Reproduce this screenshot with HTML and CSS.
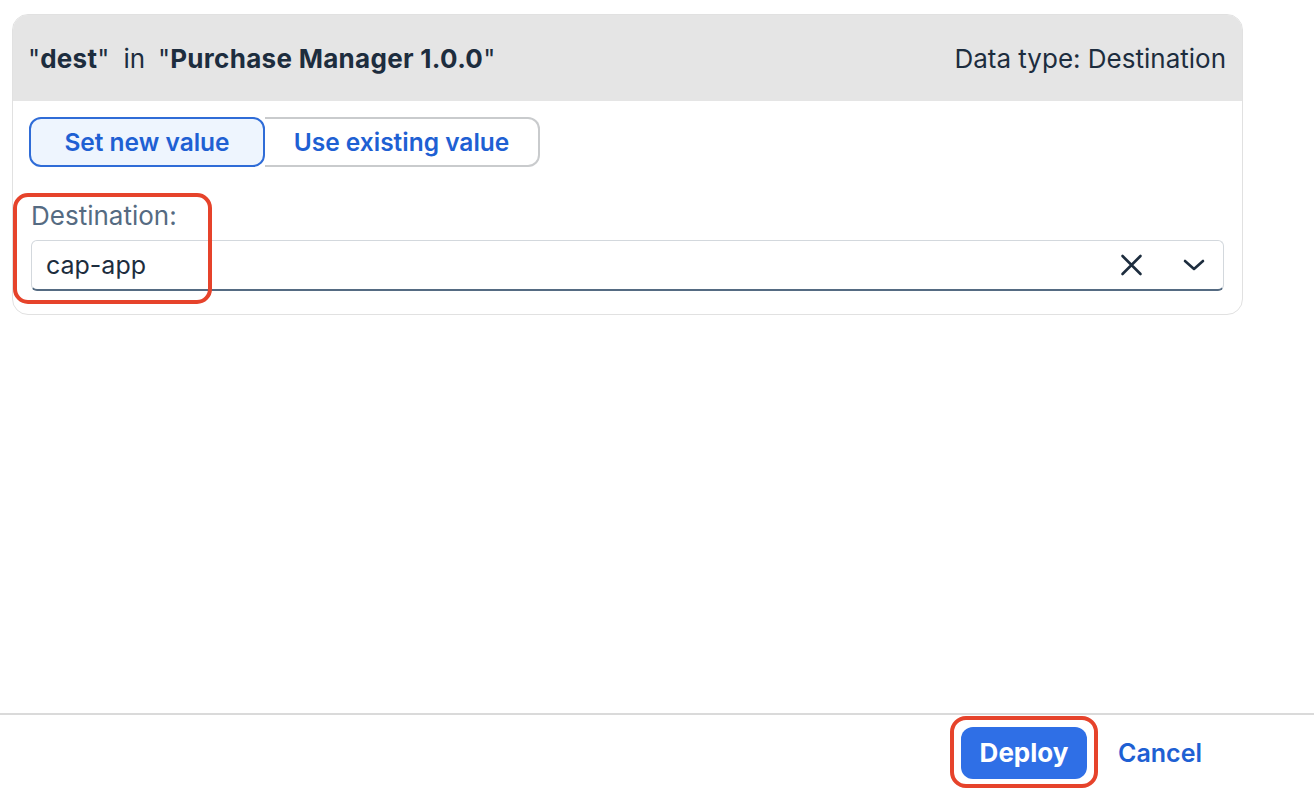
FILE: index.html
```html
<!DOCTYPE html>
<html lang="en">
<head>
<meta charset="utf-8">
<title>Destination</title>
<link rel="stylesheet" href="styles.css">
</head>
<body>
<div class="page">
  <main class="main">
    <section class="card">
      <header class="card-header">
        <div class="title"><span class="q">"</span><b>dest</b><span class="q">"</span><span class="in">in</span><span class="q">"</span><b>Purchase Manager 1.0.0</b><span class="q">"</span></div>
        <div class="type">Data type: Destination</div>
      </header>
      <div class="card-body">
        <div class="segmented">
          <button class="seg seg-active">Set new value</button>
          <button class="seg">Use existing value</button>
        </div>
        <div class="field">
          <label class="label">Destination:</label>
          <div class="input">
            <span class="value">cap-app</span>
            <span class="icons">
              <svg class="ico-x" width="22" height="22" viewBox="0 0 22 22"><path d="M2 2 L20 20 M20 2 L2 20" stroke="#1d2d3e" stroke-width="2.6" stroke-linecap="round" fill="none"/></svg>
              <svg class="ico-chev" width="22" height="12" viewBox="0 0 22 12"><path d="M2 2 L11 10 L20 2" stroke="#1d2d3e" stroke-width="2.6" stroke-linecap="round" stroke-linejoin="round" fill="none"/></svg>
            </span>
          </div>
          <div class="highlight hl-field"></div>
        </div>
      </div>
    </section>
  </main>
  <footer class="footer">
    <div class="deploy-wrap">
      <button class="btn-primary">Deploy</button>
      <div class="highlight hl-deploy"></div>
    </div>
    <button class="btn-link">Cancel</button>
  </footer>
</div>
</body>
</html>
```
FILE: styles.css
```css
* { box-sizing: border-box; }
html, body { margin: 0; padding: 0; background: #fff; }
body {
  font-family: "Inter", "Noto Sans", "Liberation Sans", sans-serif;
  color: #1d2d3e;
}
.page {
  width: 1314px;
  height: 790px;
  display: flex;
  flex-direction: column;
}
.main {
  flex: 1;
  padding: 14px 71px 0 12px;
}
.card {
  border: 1px solid #e1e1e1;
  border-radius: 16px;
}
.card-header {
  height: 86px;
  background: #e5e5e5;
  border-radius: 15px 15px 0 0;
  display: flex;
  align-items: center;
  justify-content: space-between;
  padding: 0 16px 0 15px;
  font-size: 26px;
  color: #1d2d3e;
}
.title b { font-weight: 700; letter-spacing: 0.3px; }
.title .q { font-weight: 400; }
.title .in { margin: 0 13px 0 14px; }
.type { font-weight: 400; }
.card-body {
  padding: 16px 18px 23px 16px;
}
.segmented {
  display: flex;
  width: 511px;
  height: 50px;
}
.seg {
  font-family: inherit;
  font-size: 24.5px;
  font-weight: 600;
  color: #1e60d3;
  background: #fff;
  border: 2px solid #c9cbcd;
  border-left: none;
  border-radius: 0 12px 12px 0;
  padding: 0 12px;
  flex: 1;
}
.seg-active {
  flex: 0 0 236px;
  background: #eef5fe;
  border: 2px solid #2f6cd7;
  border-radius: 12px;
}
.field {
  position: relative;
  padding: 34px 0 0 2px;
}
.label {
  display: block;
  font-size: 26px;
  color: #556b82;
  line-height: 30px;
  margin-bottom: 9px;
}
.input {
  height: 51px;
  border: 1px solid #d3d8dd;
  border-bottom: 2px solid #556b82;
  border-radius: 6px;
  display: flex;
  align-items: center;
  justify-content: space-between;
  padding: 0 18px 0 14px;
}
.value {
  font-size: 25px;
  color: #1d2d3e;
}
.icons {
  display: flex;
  align-items: center;
  gap: 40px;
}
.ico-x { width: 23px; height: 22px; }
.highlight {
  position: absolute;
  border: 4px solid #e6432b;
  border-radius: 15px;
  pointer-events: none;
}
.hl-field {
  left: -16px;
  top: 26px;
  width: 199px;
  height: 111px;
}
.footer {
  height: 77px;
  border-top: 2px solid #dadada;
  display: flex;
  align-items: center;
  justify-content: flex-end;
  padding: 0 96px 0 0;
  gap: 15px;
}
.deploy-wrap {
  position: relative;
}
.btn-primary {
  display: block;
  width: 126px;
  height: 52px;
  background: #2f6fe6;
  color: #fff;
  border: none;
  border-radius: 12px;
  font-family: inherit;
  font-size: 26px;
  font-weight: 700;
}
.hl-deploy {
  left: -11px;
  top: -11px;
  right: -11px;
  bottom: -9px;
  border-radius: 16px;
}
.btn-link {
  background: none;
  border: none;
  font-family: inherit;
  font-size: 25px;
  font-weight: 600;
  color: #1e60d3;
  padding: 0 16px;
  height: 52px;
}
```
